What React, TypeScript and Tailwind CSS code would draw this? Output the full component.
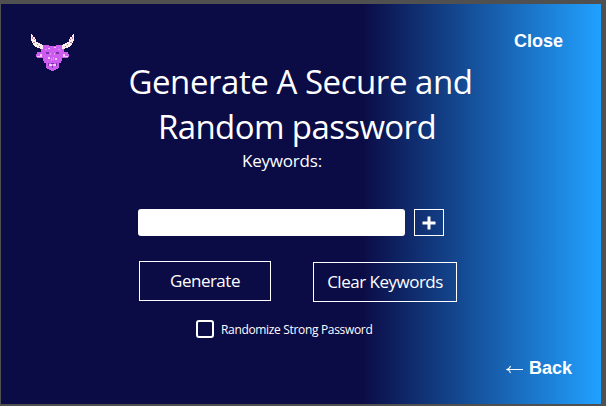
const BullLogo = () => {
  return (
    <svg width="46" height="40" viewBox="0 0 46 40" shapeRendering="crispEdges">
      <path
        d="M1 1h1v1h1v2h2v2h1v3h2v1h2v1h2v1h2v4h-4v-1H7v-1H5v-1H4v-1H3v-2H2V8H1z"
        fill="#fbeee8"
      />
      <path
        d="M44 1h-1v1h-1v2h-2v2h-1v3h-2v1h-2v1h-2v1h-2v4h4v-1h3v-1h2v-1h1v-1h1v-2h1V8h1z"
        fill="#fbeee8"
      />
      <path
        d="M2 4h1v2H2zM4 6h1v1H4zM3 9h2v1H3zM7 11h1v1H7zM9 13h1v1H9zM42 4h1v2h-1zM40 6h1v1h-1zM40 9h2v1h-2zM37 11h1v1h-1zM35 13h1v1h-1z"
        fill="#b56d99"
      />
      <path
        d="M13 12h6v1h7v-1h6v4h2v3h4v2h1v3h-1v1h-6v3h-1v2h-2v5h-1v1h-2v1h-2v1h-3v-1h-2v-1h-2v-1h-1v-5h-2v-2h-1v-3H7v-1H6v-3h1v-2h4v-3h2z"
        fill="#cc5df0"
      />
      <path
        d="M7 23h3v-2h2v3H7zM38 23h-3v-2h-2v3h5zM18 15h2v1h-2zM24 14h2v1h-2zM18 24h2v2h-2zM25 25h2v2h-2zM19 31h3v2h-3zM23 31h3v2h-3z"
        fill="#f4c6f2"
      />
      <path
        d="M16 19h3v2h-3zM26 19h3v2h-3zM18 30h1v3h-1zM26 30h1v3h-1zM21 30h3v1h-3zM22 33h1v2h-1z"
        fill="#7a35ab"
      />
      <path
        d="M15 16h2v1h-2zM28 16h2v1h-2zM20 20h1v2h-1zM24 20h1v2h-1zM21 25h1v3h-1zM23 24h1v3h-1z"
        fill="#e58df7"
      />
    </svg>
  )
}

const Header = () => {
  return (
    <div className="flex h-[54px] items-start justify-between pl-[29px] pr-[38px] pt-[29px]">
      <BullLogo />
      <button className="-mt-[2px] font-['Liberation_Sans',Arial,sans-serif] text-[18px] font-bold leading-5">
        Close
      </button>
    </div>
  )
}

const KeywordInput = () => {
  return (
    <div className="ml-[137px] mt-[36px] flex gap-[9px]">
      <input
        type="text"
        className="h-[27px] w-[267px] rounded-[3px] bg-white px-2 text-sm text-black outline-none"
      />
      <button
        aria-label="Add keyword"
        className="flex h-[27px] w-[30px] items-center justify-center border border-white"
      >
        <svg width="14" height="14" viewBox="0 0 14 14" fill="white">
          <path d="M5.5 0.5h3v5h5v3h-5v5h-3v-5h-5v-3h5z" />
        </svg>
      </button>
    </div>
  )
}

const App = () => {
  return (
    <div className="h-[406px] w-[606px] overflow-hidden bg-[#505050] pl-px pt-1 font-['Open_Sans','Noto_Sans',sans-serif] text-white">
      <div className="flex h-[400px] w-[600px] flex-col bg-[linear-gradient(to_right,#0b0b45_60%,#21a1ff_100%)]">
        <Header />
        <h1 className="mt-px w-[599px] whitespace-nowrap text-center text-[33px] leading-[45px] tracking-[-0.45px]">
          Generate A Secure and
          <br />
          <span className="-ml-[7px] tracking-[-0.6px]">Random password</span>
        </h1>
        <p className="ml-[241px] text-[17px] leading-6 tracking-[-0.2px]">
          Keywords:
        </p>
        <KeywordInput />
        <div className="ml-[138px] mt-[25px] flex gap-[42px] text-[17px] tracking-[-0.5px]">
          <button className="h-10 w-[132px] border border-white">
            Generate
          </button>
          <button className="mt-px h-10 w-[144px] whitespace-nowrap border border-white">
            Clear Keywords
          </button>
        </div>
        <label className="ml-[195px] mt-[18px] flex h-[18px] items-center gap-[7px] text-[12px] tracking-[-0.33px]">
          <span className="h-[18px] w-[18px] rounded-[3px] border-2 border-white" />
          <span className="mt-0.5 whitespace-nowrap">
            Randomize Strong Password
          </span>
        </label>
        <button className="ml-[505px] mt-[20px] flex items-center gap-[6px] self-start font-['Liberation_Sans',Arial,sans-serif] text-[18px] font-bold leading-5">
          <svg
            width="17"
            height="9"
            viewBox="0 0 17 9"
            fill="none"
            stroke="white"
            strokeWidth="1.1"
            className="mt-[3px]"
          >
            <path d="M1 4.5h16M4.5 1C4 2.8 2.8 4 1 4.5C2.8 5 4 6.2 4.5 8" />
          </svg>
          Back
        </button>
      </div>
    </div>
  )
}

export default App
